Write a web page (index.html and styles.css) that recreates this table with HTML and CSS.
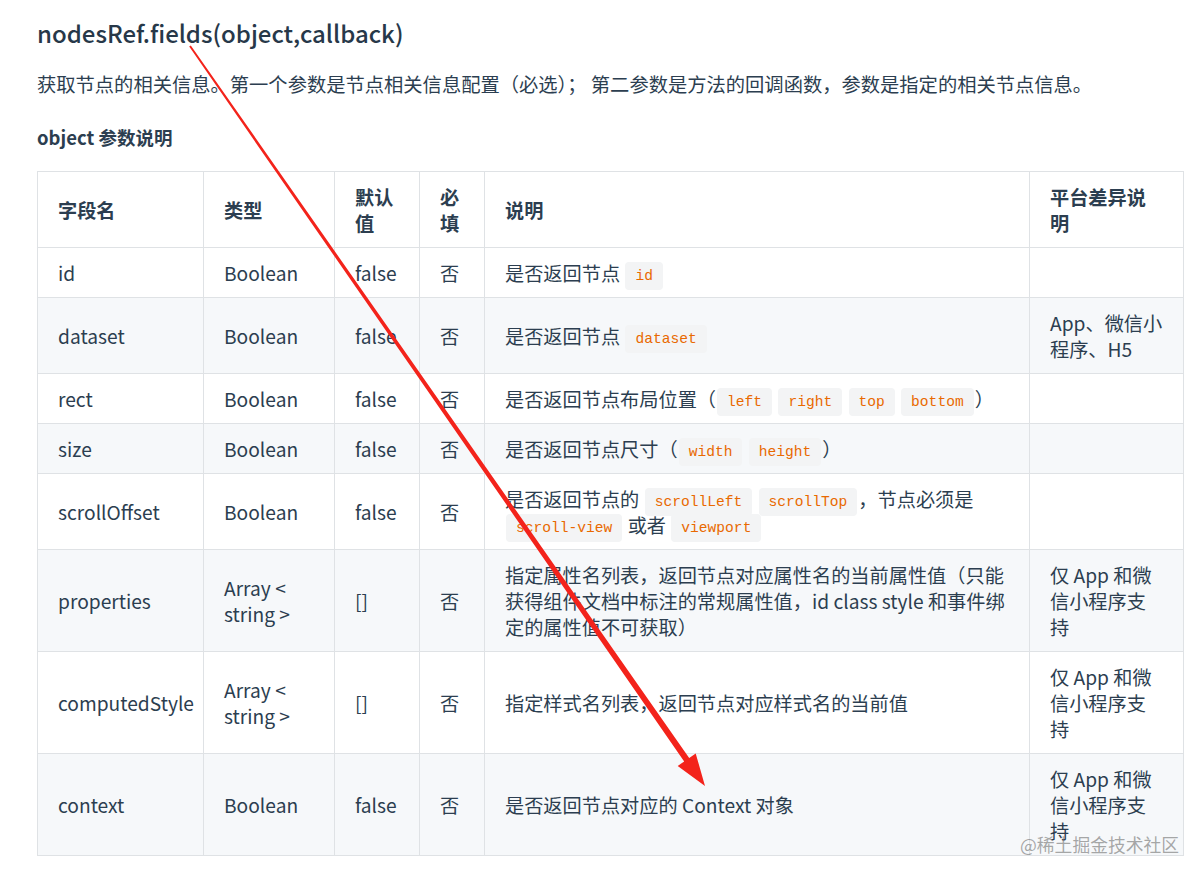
FILE: index.html
```html
<!DOCTYPE html>
<html lang="zh-CN">
<head>
<meta charset="utf-8">
<title>nodesRef.fields</title>
<link rel="stylesheet" href="styles.css">
</head>
<body>
<div class="page">
  <h1 class="title">nodesRef.fields(object,callback)</h1>
  <p class="desc">获取节点的相关信息。第一个参数是节点相关信息配置（必选）； 第二参数是方法的回调函数，参数是指定的相关节点信息。</p>
  <h3 class="sub">object 参数说明</h3>
  <table class="params">
    <colgroup>
      <col class="c1"><col class="c2"><col class="c3"><col class="c4"><col class="c5"><col class="c6">
    </colgroup>
    <thead>
      <tr><th>字段名</th><th>类型</th><th>默认值</th><th>必填</th><th>说明</th><th>平台差异说明</th></tr>
    </thead>
    <tbody>
      <tr><td>id</td><td>Boolean</td><td>false</td><td>否</td><td>是否返回节点 <code>id</code></td><td></td></tr>
      <tr><td>dataset</td><td>Boolean</td><td>false</td><td>否</td><td>是否返回节点 <code>dataset</code></td><td>App、微信小程序、H5</td></tr>
      <tr><td>rect</td><td>Boolean</td><td>false</td><td>否</td><td>是否返回节点布局位置（<code>left</code> <code>right</code> <code>top</code> <code>bottom</code>）</td><td></td></tr>
      <tr><td>size</td><td>Boolean</td><td>false</td><td>否</td><td>是否返回节点尺寸（<code>width</code> <code>height</code>）</td><td></td></tr>
      <tr><td>scrollOffset</td><td>Boolean</td><td>false</td><td>否</td><td>是否返回节点的 <code>scrollLeft</code> <code>scrollTop</code>，节点必须是 <code>scroll-view</code> 或者 <code>viewport</code></td><td></td></tr>
      <tr><td>properties</td><td>Array &lt; string &gt;</td><td>[]</td><td>否</td><td>指定属性名列表，返回节点对应属性名的当前属性值（只能获得组件文档中标注的常规属性值，id class style 和事件绑定的属性值不可获取）</td><td>仅 App 和微信小程序支持</td></tr>
      <tr><td>computedStyle</td><td>Array &lt; string &gt;</td><td>[]</td><td>否</td><td>指定样式名列表，返回节点对应样式名的当前值</td><td>仅 App 和微信小程序支持</td></tr>
      <tr><td>context</td><td>Boolean</td><td>false</td><td>否</td><td>是否返回节点对应的 Context 对象</td><td>仅 App 和微信小程序支持</td></tr>
    </tbody>
  </table>
</div>
<svg class="arrow" width="1204" height="879" viewBox="0 0 1204 879" aria-hidden="true">
  <polygon points="190.8,45.4 689.2,758.0 695.7,753.4 705,786 677.7,766.0 684.2,761.4 189.2,46.6" fill="#f3231b"/>
</svg>
<div class="watermark">@稀土掘金技术社区</div>
</body>
</html>
```
FILE: styles.css
```css
html, body {
  margin: 0;
  padding: 0;
  background: #ffffff;
}
body {
  font-family: "Noto Sans CJK SC", "Noto Sans", sans-serif;
  color: #2c3e50;
  width: 1204px;
  height: 879px;
  overflow: hidden;
  position: relative;
}
.page {
  padding: 16px 0 0 37px;
}
.title {
  margin: 0 0 21px 0;
  font-size: 24px;
  line-height: 34px;
  font-weight: 500;
  color: #273849;
}
.desc {
  margin: 0 0 27px 0;
  font-size: 19.3px;
  line-height: 26px;
  color: #2c3e50;
}
.sub {
  margin: 0 0 21px 0;
  font-size: 18.5px;
  line-height: 26px;
  font-weight: 700;
}
.params {
  border-collapse: collapse;
  table-layout: fixed;
  width: 1146px;
  font-size: 19.2px;
  line-height: 26px;
}
.c1 { width: 166px; }
.c2 { width: 131px; }
.c3 { width: 85px; }
.c4 { width: 65px; }
.c5 { width: 545px; }
.c6 { width: 154px; }
.params th,
.params td {
  border: 1px solid #dfe2e5;
  padding: 11.5px 20px;
  text-align: left;
  vertical-align: middle;
}
.params th {
  font-weight: 700;
}
.params tbody tr:nth-child(2n) {
  background: #f6f8fa;
}
.params code {
  font-family: "Liberation Mono", "DejaVu Sans Mono", monospace;
  font-size: 14.6px;
  line-height: 1;
  color: #e96900;
  background: #f3f4f5;
  padding: 6px 10px;
  border-radius: 4px;
  margin: 0 1px;
  vertical-align: 1px;
}
.arrow {
  position: absolute;
  left: 0;
  top: 0;
  pointer-events: none;
}
.watermark {
  position: absolute;
  left: 1020px;
  top: 831px;
  font-size: 17.8px;
  line-height: 26px;
  color: rgba(110, 110, 110, 0.6);
  white-space: nowrap;
}
```
